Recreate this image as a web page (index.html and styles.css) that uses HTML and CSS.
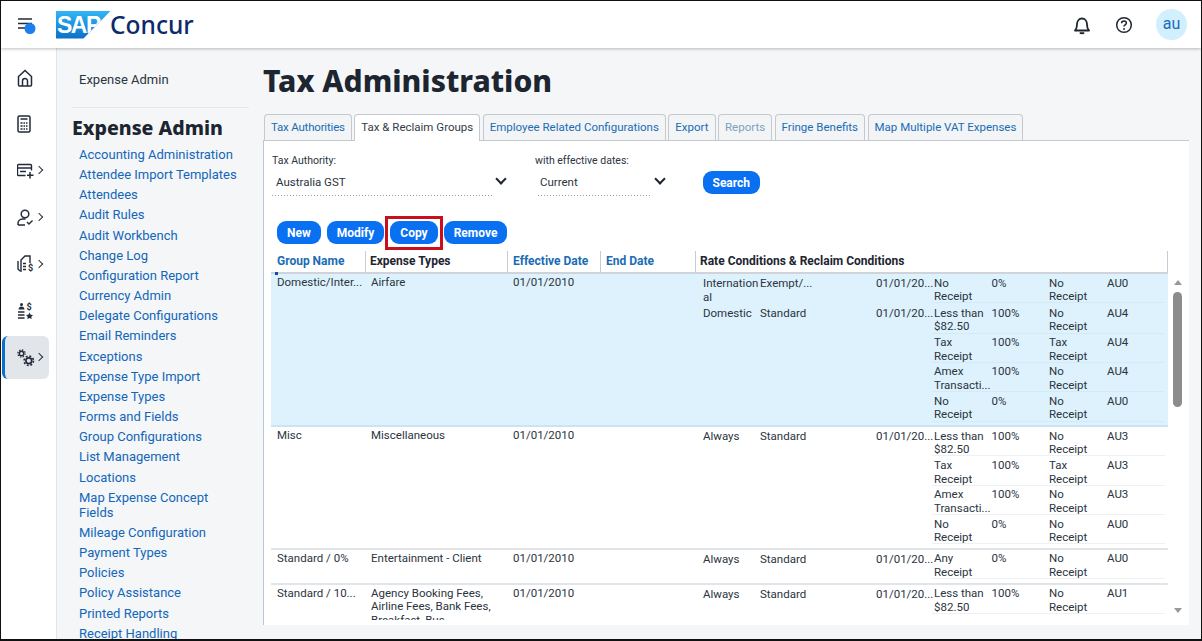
FILE: index.html
```html
<!DOCTYPE html>
<html>
<head>
    <meta name="viewport" content="width=device-width, initial-scale=1.0">
    <title>Tax Administration</title>
    <link rel="stylesheet" href="styles.css">
</head>
<body>
<div class="frame">
    <header class="topbar">
        <svg class="menu-icon" width="20" height="22" viewBox="0 0 20 22">
            <path d="M1 4h14M1 8.500h14M1 13h9" fill="none" stroke="#222b3a" stroke-width="1.600"/>
            <circle cx="13" cy="13.500" r="5.500" fill="#1a7ff0"/>
        </svg>
        <div class="sap-logo">SAP</div>
        <div class="brand">Concur</div>
        <div class="top-actions">
            <svg width="20" height="20" viewBox="0 0 20 20"><path d="M3 15.500c1.500-1.500 2-3 2-6 0-3.300 2-6 5-6s5 2.700 5 6c0 3 .5 4.500 2 6z" fill="none" stroke="#1d2530" stroke-width="1.800" stroke-linejoin="round"/><path d="M8 17.500c.5 1 3.500 1 4 0" fill="none" stroke="#1d2530" stroke-width="1.800"/></svg>
            <svg width="18" height="18" viewBox="0 0 18 18"><circle cx="9" cy="9" r="7.300" fill="none" stroke="#1d2530" stroke-width="1.500"/><path d="M6.600 7.200c0-1.400 1.100-2.300 2.400-2.300s2.400.9 2.400 2.200c0 1.800-2.400 1.800-2.400 3.500" fill="none" stroke="#1d2530" stroke-width="1.500"/><circle cx="9" cy="13" r=".9" fill="#1d2530"/></svg>
            <div class="avatar">au</div>
        </div>
    </header>

    <div class="page">
        <nav class="rail">
            <a class="rail-item"><svg width="16" height="18" viewBox="0 0 16 18"><path d="M1.500 7.500 8 1.500l6.500 6v8.500a1 1 0 0 1-1 1h-11a1 1 0 0 1-1-1z" fill="none" stroke="#222b3a" stroke-width="1.500"/><path d="M5.500 17v-5a2.500 2.500 0 0 1 5 0v5" fill="none" stroke="#222b3a" stroke-width="1.500"/></svg></a>
            <a class="rail-item"><svg width="14" height="18" viewBox="0 0 14 18"><rect x="1" y="1" width="12" height="16" rx="1.500" fill="none" stroke="#222b3a" stroke-width="1.500"/><path d="M3.500 4h7M3.500 8h2M6.500 8h1.500M9 8h1.500M3.500 11h2M6.500 11h1.500M9 11h1.500M3.500 14h2M6.500 14h1.500M9 14h1.500" stroke="#222b3a" stroke-width="1.500"/></svg></a>
            <a class="rail-item has-sub"><svg width="17" height="16" viewBox="0 0 17 16"><path d="M8.500 12.500H1.500a1 1 0 0 1-1-1v-9a1 1 0 0 1 1-1h12a1 1 0 0 1 1 1v5M.5 5h14M3 8.500h6" fill="none" stroke="#222b3a" stroke-width="1.400"/><path d="M13 9v6.500M10 12.200h6.500" stroke="#222b3a" stroke-width="1.500"/></svg><span class="chev"></span></a>
            <a class="rail-item has-sub"><svg width="17" height="17" viewBox="0 0 17 17"><circle cx="8" cy="5" r="3.800" fill="none" stroke="#222b3a" stroke-width="1.500"/><path d="M1 16v-1.500c0-2.500 2-4.500 4.500-4.500h3M1 16h7" fill="none" stroke="#222b3a" stroke-width="1.500"/><path d="m10 13 2 2 3.500-3.500" fill="none" stroke="#222b3a" stroke-width="1.400"/></svg><span class="chev"></span></a>
            <a class="rail-item has-sub"><svg width="17" height="18" viewBox="0 0 17 18"><path d="M1 6v8l2 2M4 17V5l4-4h5v7" fill="none" stroke="#222b3a" stroke-width="1.400"/><path d="M6 8.500h3M6 11.500h3M6 14.500h3" stroke="#222b3a" stroke-width="1.400"/><text x="11" y="16" class="rail-dollar">$</text></svg><span class="chev"></span></a>
            <a class="rail-item"><svg width="16" height="18" viewBox="0 0 16 18"><circle cx="4.500" cy="2.500" r="1.500" fill="#222b3a"/><path d="M1.500 7.500c0-2 1.500-3 3-3s3 1 3 3z" fill="#222b3a"/><path d="M1 10h6.500M1 13h6.500M1 16h6.500" stroke="#222b3a" stroke-width="1.300"/><text x="9.500" y="8" class="rail-dollar">$</text><path d="m12.500 10.500 1.100 2.200 2.400.3-1.700 1.700.4 2.400-2.200-1.100-2.200 1.100.4-2.400L9 13l2.400-.3z" fill="#222b3a"/></svg></a>
            <a class="rail-item has-sub active"><svg width="18" height="18" viewBox="0 0 18 18"><g fill="none" stroke="#222b3a"><circle cx="4.500" cy="4.500" r="2.200" stroke-width="1.400"/><circle cx="4.500" cy="4.500" r="3.600" stroke-width="1.300" stroke-dasharray="1.400 1.430"/><circle cx="11.800" cy="11.800" r="2.900" stroke-width="1.700"/><circle cx="11.800" cy="11.800" r="4.700" stroke-width="1.600" stroke-dasharray="1.900 1.790"/></g></svg><span class="chev"></span></a>
        </nav>

        <aside class="sidebar">
            <div class="crumb">Expense Admin</div>
            <h2 class="side-title">Expense Admin</h2>
            <ul class="side-links">
                <li>Accounting Administration</li>
                <li>Attendee Import Templates</li>
                <li>Attendees</li>
                <li>Audit Rules</li>
                <li>Audit Workbench</li>
                <li>Change Log</li>
                <li>Configuration Report</li>
                <li>Currency Admin</li>
                <li>Delegate Configurations</li>
                <li>Email Reminders</li>
                <li>Exceptions</li>
                <li>Expense Type Import</li>
                <li>Expense Types</li>
                <li>Forms and Fields</li>
                <li>Group Configurations</li>
                <li>List Management</li>
                <li>Locations</li>
                <li>Map Expense Concept Fields</li>
                <li>Mileage Configuration</li>
                <li>Payment Types</li>
                <li>Policies</li>
                <li>Policy Assistance</li>
                <li>Printed Reports</li>
                <li>Receipt Handling</li>
            </ul>
        </aside>

        <main class="content">
            <h1 class="page-title">Tax Administration</h1>
            <div class="tabs">
                <a class="tab tab-first">Tax Authorities</a>
                <a class="tab tab-active">Tax &amp; Reclaim Groups</a>
                <a class="tab">Employee Related Configurations</a>
                <a class="tab">Export</a>
                <a class="tab tab-disabled">Reports</a>
                <a class="tab">Fringe Benefits</a>
                <a class="tab">Map Multiple VAT Expenses</a>
            </div>
            <section class="panel">
                <div class="filters">
                    <div class="filter filter-authority">
                        <label class="filter-label">Tax Authority:</label>
                        <div class="select"><span>Australia GST</span><span class="select-chev"></span></div>
                    </div>
                    <div class="filter filter-dates">
                        <label class="filter-label">with effective dates:</label>
                        <div class="select"><span>Current</span><span class="select-chev"></span></div>
                    </div>
                    <button class="btn btn-search">Search</button>
                </div>
                <div class="toolbar">
                    <button class="btn">New</button>
                    <button class="btn">Modify</button>
                    <span class="copy-mark"><button class="btn">Copy</button></span>
                    <button class="btn">Remove</button>
                </div>

                <div class="grid">
                    <div class="grid-main">
                        <div class="grid-row grid-head">
                            <div class="th th-link th-sorted">Group Name</div>
                            <div class="th">Expense Types</div>
                            <div class="th th-link">Effective Date</div>
                            <div class="th th-link">End Date</div>
                            <div class="th">Rate Conditions &amp; Reclaim Conditions</div>
                        </div>
                        <div class="grid-body">
                            <div class="grid-row row-selected">
                                <div class="td">Domestic/Inter...</div>
                                <div class="td">Airfare</div>
                                <div class="td">01/01/2010</div>
                                <div class="td"></div>
                                <div class="rate">
                                    <div class="rate-group">
                                        <div class="cell">Internation<br>al</div><div class="cell">Exempt/...</div><div class="cell">01/01/20...</div>
                                        <div class="subrows">
                                            <div class="sub"><div>No<br>Receipt</div><div>0%</div><div>No<br>Receipt</div><div>AU0</div></div>
                                        </div>
                                    </div>
                                    <div class="rate-group">
                                        <div class="cell">Domestic</div><div class="cell">Standard</div><div class="cell">01/01/20...</div>
                                        <div class="subrows">
                                            <div class="sub"><div>Less than<br>$82.50</div><div>100%</div><div>No<br>Receipt</div><div>AU4</div></div>
                                            <div class="sub"><div>Tax<br>Receipt</div><div>100%</div><div>Tax<br>Receipt</div><div>AU4</div></div>
                                            <div class="sub"><div>Amex<br>Transacti...</div><div>100%</div><div>No<br>Receipt</div><div>AU4</div></div>
                                            <div class="sub"><div>No<br>Receipt</div><div>0%</div><div>No<br>Receipt</div><div>AU0</div></div>
                                        </div>
                                    </div>
                                </div>
                            </div>
                            <div class="grid-row">
                                <div class="td">Misc</div>
                                <div class="td">Miscellaneous</div>
                                <div class="td">01/01/2010</div>
                                <div class="td"></div>
                                <div class="rate">
                                    <div class="rate-group">
                                        <div class="cell">Always</div><div class="cell">Standard</div><div class="cell">01/01/20...</div>
                                        <div class="subrows">
                                            <div class="sub"><div>Less than<br>$82.50</div><div>100%</div><div>No<br>Receipt</div><div>AU3</div></div>
                                            <div class="sub"><div>Tax<br>Receipt</div><div>100%</div><div>Tax<br>Receipt</div><div>AU3</div></div>
                                            <div class="sub"><div>Amex<br>Transacti...</div><div>100%</div><div>No<br>Receipt</div><div>AU3</div></div>
                                            <div class="sub"><div>No<br>Receipt</div><div>0%</div><div>No<br>Receipt</div><div>AU0</div></div>
                                        </div>
                                    </div>
                                </div>
                            </div>
                            <div class="grid-row">
                                <div class="td">Standard / 0%</div>
                                <div class="td">Entertainment - Client</div>
                                <div class="td">01/01/2010</div>
                                <div class="td"></div>
                                <div class="rate">
                                    <div class="rate-group">
                                        <div class="cell">Always</div><div class="cell">Standard</div><div class="cell">01/01/20...</div>
                                        <div class="subrows">
                                            <div class="sub"><div>Any<br>Receipt</div><div>0%</div><div>No<br>Receipt</div><div>AU0</div></div>
                                        </div>
                                    </div>
                                </div>
                            </div>
                            <div class="grid-row">
                                <div class="td">Standard / 10...</div>
                                <div class="td">Agency Booking Fees,<br>Airline Fees, Bank Fees,<br>Breakfast, Bus</div>
                                <div class="td">01/01/2010</div>
                                <div class="td"></div>
                                <div class="rate">
                                    <div class="rate-group">
                                        <div class="cell">Always</div><div class="cell">Standard</div><div class="cell">01/01/20...</div>
                                        <div class="subrows">
                                            <div class="sub"><div>Less than<br>$82.50</div><div>100%</div><div>No<br>Receipt</div><div>AU1</div></div>
                                        </div>
                                    </div>
                                </div>
                            </div>
                        </div>
                    </div>
                    <div class="scrollbar">
                        <span class="scroll-up"></span>
                        <span class="scroll-thumb"></span>
                        <span class="scroll-down"></span>
                    </div>
                </div>
            </section>
        </main>
    </div>
</div>
</body>
</html>
```

FILE: styles.css
```css
* {
    box-sizing: border-box;
}
html, body {
    margin: 0;
    height: 100%;
    overflow: hidden;
}
body {
    font-family: Roboto, "Noto Sans", sans-serif;
    color: #2b3440;
    background: #f4f6f8;
}
.frame {
    height: 641px;
    border: 1px solid #111;
    border-bottom-width: 2px;
    display: flex;
    flex-direction: column;
    overflow: hidden;
}

/* top bar */
.topbar {
    height: 47px;
    flex: none;
    background: #fff;
    display: flex;
    align-items: center;
    padding-left: 16px;
    box-shadow: 0 1px 3px rgba(0, 0, 0, 0.25);
    position: relative;
    z-index: 2;
}
.menu-icon {
    margin-top: 2px;
}
.sap-logo {
    width: 55px;
    height: 28px;
    margin-left: 19px;
    padding: 2px 0 0 1px;
    background: linear-gradient(180deg, #33b5f5, #0a6fc9);
    clip-path: polygon(0 0, 100% 0, 50% 100%, 0 100%);
    color: #fff;
    font-family: "Liberation Sans", sans-serif;
    font-size: 23px;
    line-height: 24px;
    font-weight: 700;
    letter-spacing: -1.500px;
}
.brand {
    margin-left: -1px;
    color: #0d2a6b;
    font-family: "Noto Sans", sans-serif;
    font-size: 24.500px;
    font-weight: 500;
    line-height: 28px;
}
.top-actions {
    margin-left: auto;
    display: flex;
    align-items: center;
    gap: 23px;
    padding-right: 14px;
}
.avatar {
    width: 31px;
    height: 31px;
    border-radius: 50%;
    background: #d1effc;
    color: #1c6ab8;
    font-size: 16px;
    line-height: 30px;
    text-align: center;
}

/* left rail */
.page {
    flex: 1;
    min-height: 0;
    display: flex;
}
.rail {
    width: 56px;
    flex: none;
    background: #fff;
    padding-top: 8px;
    border-right: 1px solid #e2e5e9;
    display: flex;
    flex-direction: column;
    gap: 3.700px;
    padding-left: 1px;
}
.rail-item {
    width: 47px;
    height: 43px;
    display: flex;
    align-items: center;
    justify-content: flex-start;
    padding-left: 15px;
    border-radius: 6px;
    position: relative;
}
.rail-dollar {
    font-size: 9px;
    font-weight: 700;
    fill: #222b3a;
}
.chev {
    position: absolute;
    left: 34px;
    top: 18px;
    width: 6px;
    height: 6px;
    border-top: 1.300px solid #2b3440;
    border-right: 1.300px solid #2b3440;
    transform: rotate(45deg);
}
.active {
    background: #e2e5ea;
    border-left: 3px solid #0a6ed1;
    padding-left: 12px;
}
.active .chev {
    left: 31px;
}

/* sidebar */
.sidebar {
    width: 194px;
    flex: none;
    padding: 23px 2px 0 15px;
}
.crumb {
    font-size: 13px;
    line-height: 18px;
    padding-left: 7px;
    padding-bottom: 18px;
    border-bottom: 1px solid #e6e9ec;
}
.side-title {
    margin: 7px 0 6px;
    color: #1c2530;
    font-family: "Noto Sans", sans-serif;
    font-size: 19.500px;
    line-height: 26px;
    font-weight: 800;
}
.side-links {
    list-style: none;
    margin: 0;
    padding: 0 0 0 7px;
    color: #1366b8;
    font-size: 13px;
    line-height: 15.150px;
}
.side-links li {
    max-width: 160px;
    margin-bottom: 5px;
}

/* main content */
.content {
    flex: 1;
    min-width: 0;
    padding: 0 12px 14px 12px;
    display: flex;
    flex-direction: column;
}
.page-title {
    margin: 14px 0 14px;
    color: #1c2530;
    font-family: "Noto Sans", sans-serif;
    font-size: 30px;
    line-height: 38px;
    font-weight: 800;
}
.tabs {
    display: flex;
    gap: 2.500px;
    height: 26px;
    position: relative;
    z-index: 1;
}
.tab {
    height: 26px;
    padding: 0 6px;
    background: #f2f4f6;
    border: 1px solid #c4c9cf;
    border-bottom: 0;
    border-radius: 4px 4px 0 0;
    color: #1a6cb5;
    font-size: 11.500px;
    line-height: 25px;
    white-space: nowrap;
}
.tab-first {
    margin-left: 1px;
    letter-spacing: -0.200px;
}
.tab-active {
    height: 27px;
    background: #fff;
    color: #333c47;
}
.tab-disabled {
    color: #7f9fc0;
}
.panel {
    flex: 1;
    min-height: 0;
    background: #fff;
    border-top: 1px solid #c4c9cf;
    border-left: 1px solid #b9c6d6;
    display: flex;
    flex-direction: column;
    padding: 12px 0 5px 7px;
}

/* filters */
.filters {
    display: flex;
    align-items: flex-start;
    height: 53px;
    font-size: 10.500px;
}
.filter-label {
    display: block;
    line-height: 15px;
    padding-left: 1px;
}
.filter-authority {
    width: 263px;
}
.filter-dates {
    width: 169px;
}
.select {
    height: 28px;
    padding: 6px 0 0 4px;
    display: flex;
    font-size: 11.500px;
    line-height: 17px;
    position: relative;
    background-image: linear-gradient(90deg, #999 50%, transparent 50%);
    background-size: 3px 1px;
    background-repeat: repeat-x;
    background-position: left bottom;
}
.filter-authority .select {
    width: 220px;
    margin-left: 1px;
}
.filter-dates .select {
    width: 114px;
    margin-left: 4px;
    padding-left: 2px;
}
.select-chev {
    position: absolute;
    right: -13px;
    top: 7px;
    width: 8px;
    height: 8px;
    border-right: 2px solid #1d2530;
    border-bottom: 2px solid #1d2530;
    transform: rotate(45deg);
}
.filter-dates .select-chev {
    right: -12px;
}
.btn {
    height: 23px;
    padding: 0 10px;
    border: 0;
    border-radius: 9px;
    background: #0a70f2;
    color: #fff;
    font-family: inherit;
    font-size: 12px;
    font-weight: 700;
    line-height: 22px;
}
.btn-search {
    margin-top: 18px;
    padding: 0 9.500px;
}
.toolbar {
    display: flex;
    align-items: flex-start;
    gap: 6px;
    padding-left: 6px;
    margin-top: 15px;
    height: 23px;
}
.copy-mark {
    display: block;
    padding: 2px 2px 3px;
    margin: -5px -5px -6px;
    border: 3px solid #c8101a;
}
.copy-mark .btn {
    display: block;
}

/* grid */
.grid {
    flex: 1;
    min-height: 0;
    display: flex;
    margin-top: 7px;
}
.grid-main {
    width: 897px;
    flex: none;
    display: flex;
    flex-direction: column;
    min-height: 0;
}
.grid-row {
    display: grid;
    grid-template-columns: 95px 142px 93px 95px 1fr;
    border-bottom: 2px solid #e1e4e8;
    font-size: 11.500px;
    line-height: 13.600px;
    padding-bottom: 3.500px;
}
.grid-head {
    height: 23px;
    padding-bottom: 0;
    border-bottom: 2px solid #cfd4da;
    flex: none;
    font-size: 12px;
}
.th {
    padding-left: 5px;
    font-weight: 700;
    line-height: 20px;
    color: #1c2530;
    border-right: 1px solid #c5ccd6;
    white-space: nowrap;
}
.th:first-child {
    padding-left: 6px;
    border-right: 0;
    position: relative;
}
.th:nth-child(2) {
    padding-left: 4px;
    border-left: 1px solid #c5ccd6;
    margin-left: -1px;
}
.th:last-child {
    padding-left: 4px;
}
.th-link {
    color: #1a6cb5;
}
.th-sorted::before {
    content: "";
    position: absolute;
    left: 4px;
    top: 21px;
    width: 3px;
    height: 3px;
    background: #0a4fa8;
}
.grid-body {
    flex: 1;
    min-height: 0;
    overflow: hidden;
}
.row-selected {
    background: #def2fd;
    border-bottom-color: #cbe3f3;
}
.td {
    padding: 2px 0 0 6px;
}
.td:nth-child(2), .td:nth-child(3) {
    padding-left: 5px;
}
.rate {
    padding-left: 7px;
}
.rate-group {
    display: grid;
    grid-template-columns: 57px 116px 56px 1fr;
}
.cell {
    padding-top: 3px;
}
.subrows {
    margin-right: 3px;
}
.sub {
    display: grid;
    grid-template-columns: 57.500px 57.500px 58px 1fr;
    height: 29.350px;
    padding: 2.500px 0 0 2px;
    border-bottom: 1px solid #eef0f2;
}
.row-selected .sub {
    border-bottom-color: #d3eaf8;
}

/* scrollbar */
.scrollbar {
    width: 21px;
    flex: none;
    position: relative;
    background: #fff;
    margin-bottom: -5px;
}
.scroll-up, .scroll-down {
    position: absolute;
    left: 6px;
    width: 0;
    height: 0;
    border-left: 4px solid transparent;
    border-right: 4px solid transparent;
}
.scroll-up {
    top: 29px;
    border-bottom: 5px solid #999;
}
.scroll-down {
    top: 357px;
    border-top: 5px solid #999;
}
.scroll-thumb {
    position: absolute;
    left: 5px;
    top: 41px;
    width: 9px;
    height: 115px;
    border-radius: 5px;
    background: #8c8c8c;
}
```
